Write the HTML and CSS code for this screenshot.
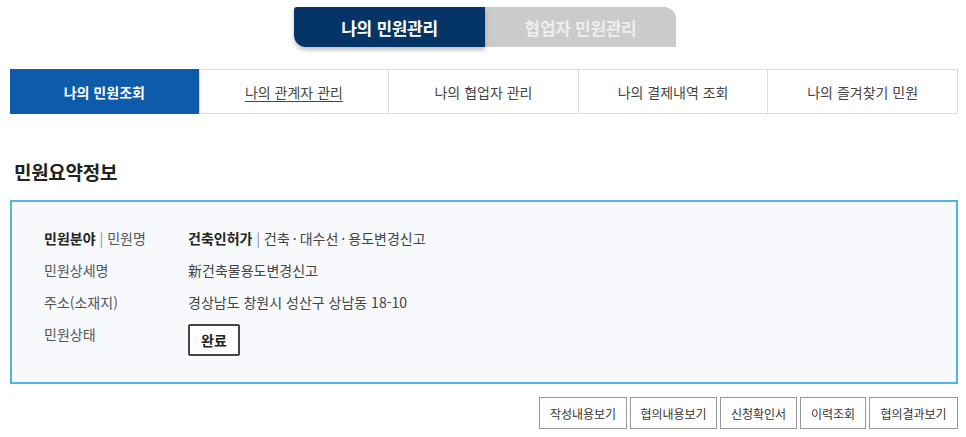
FILE: index.html
```html
<!DOCTYPE html>
<html lang="ko">
<head>
<meta charset="utf-8">
<link rel="stylesheet" href="styles.css">
</head>
<body>
<div class="page">
  <div class="toptabs">
    <div class="toptab active">나의 민원관리</div>
    <div class="toptab inactive">협업자 민원관리</div>
  </div>
  <ul class="subtabs">
    <li class="sub on">나의 민원조회</li>
    <li class="sub u">나의 관계자 관리</li>
    <li class="sub">나의 협업자 관리</li>
    <li class="sub">나의 결제내역 조회</li>
    <li class="sub">나의 즐겨찾기 민원</li>
  </ul>
  <h2 class="title">민원요약정보</h2>
  <div class="summary">
    <div class="row">
      <div class="label"><b>민원분야</b> <span class="bar">|</span> 민원명</div>
      <div class="value"><b class="strong">건축인허가</b> <span class="bar">|</span> 건축<span class="dot">·</span>대수선<span class="dot">·</span>용도변경신고</div>
    </div>
    <div class="row">
      <div class="label">민원상세명</div>
      <div class="value">新건축물용도변경신고</div>
    </div>
    <div class="row">
      <div class="label">주소(소재지)</div>
      <div class="value">경상남도 창원시 성산구 상남동 18-10</div>
    </div>
    <div class="row status">
      <div class="label">민원상태</div>
      <div class="value"><span class="badge">완료</span></div>
    </div>
  </div>
  <div class="actions">
    <button class="btn">작성내용보기</button>
    <button class="btn">협의내용보기</button>
    <button class="btn">신청확인서</button>
    <button class="btn">이력조회</button>
    <button class="btn">협의결과보기</button>
  </div>
</div>
</body>
</html>
```

FILE: styles.css
```css
* { box-sizing: border-box; }
html, body { margin: 0; padding: 0; background: #fff; }
body {
  font-family: "Noto Sans CJK KR", "Noto Sans", sans-serif;
  color: #333;
}
.page { width: 966px; padding: 7px 8px 0 10px; }

.toptabs { display: flex; justify-content: center; padding-left: 2px; height: 40px; }
.toptab {
  width: 191px; height: 40px;
  display: flex; align-items: center; justify-content: center;
  font-size: 17px; font-weight: 700; letter-spacing: -0.3px;
}
.toptab.active {
  background: #053466; color: #fff;
  border-radius: 3px 0 0 12px;
  box-shadow: 0 3px 4px rgba(0,0,0,0.25);
  position: relative; z-index: 1;
}
.toptab.inactive {
  background: #cbcbcb; color: #eeeeee;
  border-radius: 0 12px 0 0;
}

.subtabs {
  list-style: none; margin: 22px 0 0; padding: 0;
  display: flex; width: 948px; height: 45px;
  border: 1px solid #dcdcdc;
}
.sub {
  flex: 1; display: flex; align-items: center; justify-content: center;
  font-size: 14px; color: #444; border-left: 1px solid #dcdcdc;
}
.sub:first-child { border-left: 0; }
.sub.on { background: #0e5aab; color: #fff; font-weight: 700; margin: -1px 0 -1px -1px; }
.sub.u { text-decoration: underline; text-underline-offset: 3px; }

.title {
  margin: 46px 0 0 4px; font-size: 19px; font-weight: 700; color: #222;
  line-height: 24px; letter-spacing: -0.3px;
}
.summary {
  margin-top: 16px; width: 948px; height: 184px;
  border: 2px solid #52b2ea; background: #f7f9fd;
  padding: 26px 0 0 32px;
}
.row { display: flex; font-size: 14px; line-height: 20px; margin-bottom: 12px; color: #555; }
.label { width: 144px; }
.label b { color: #222; font-weight: 700; }
.strong { color: #222; font-weight: 700; }
.bar { color: #888; }
.dot { margin: 0 3px; }
.value { color: #444; }
.badge {
  display: inline-flex; align-items: center; justify-content: center;
  width: 52px; height: 32px; border: 2px solid #444; border-radius: 2px;
  background: #fff; color: #222; font-weight: 700; font-size: 14px;
}

.actions { display: flex; justify-content: flex-end; gap: 3px; width: 948px; margin-top: 13px; }
.btn {
  height: 32px; padding: 0; background: #fff; border: 1px solid #999;
  white-space: nowrap;
  font-family: "Noto Sans CJK KR", sans-serif; font-size: 12px; color: #333;
}
.btn:nth-child(1) { width: 88px; }
.btn:nth-child(2) { width: 87px; }
.btn:nth-child(3) { width: 77px; }
.btn:nth-child(4) { width: 66px; }
.btn:nth-child(5) { width: 89px; }
```
